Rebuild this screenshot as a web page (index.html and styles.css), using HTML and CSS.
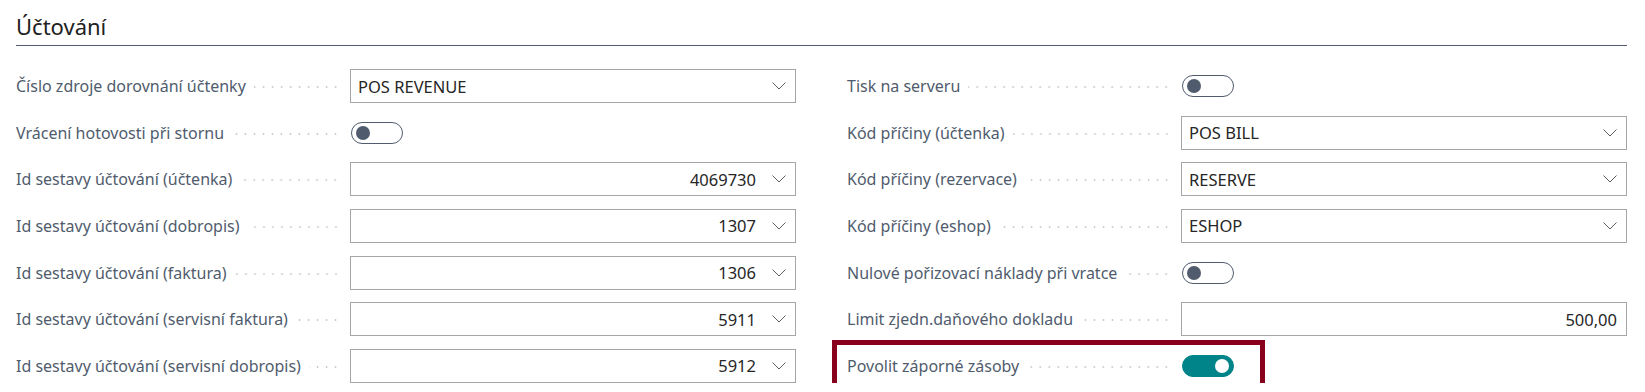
FILE: index.html
```html
<!DOCTYPE html>
<html lang="cs">
<head>
    <meta charset="UTF-8">
    <title>Účtování</title>
    <link rel="stylesheet" href="styles.css">
</head>
<body>
    <div class="section">
        <h2 class="section-title">Účtování</h2>
        <div class="columns">
            <div class="column">
                <div class="field">
                    <div class="caption"><span class="label">Číslo zdroje dorovnání účtenky</span><span class="leader"></span></div>
                    <div class="input">
                        <span class="value">POS REVENUE</span>
                        <svg class="chevron" width="14" height="8" viewBox="0 0 14 8"><path d="M0.5 0.5 L7 7 L13.5 0.5" fill="none" stroke="#605e5c" stroke-width="1"/></svg>
                    </div>
                </div>
                <div class="field">
                    <div class="caption"><span class="label">Vrácení hotovosti při stornu</span><span class="leader"></span></div>
                    <div class="control"><span class="toggle"></span></div>
                </div>
                <div class="field">
                    <div class="caption"><span class="label">Id sestavy účtování (účtenka)</span><span class="leader"></span></div>
                    <div class="input number">
                        <span class="value">4069730</span>
                        <svg class="chevron" width="14" height="8" viewBox="0 0 14 8"><path d="M0.5 0.5 L7 7 L13.5 0.5" fill="none" stroke="#605e5c" stroke-width="1"/></svg>
                    </div>
                </div>
                <div class="field">
                    <div class="caption"><span class="label">Id sestavy účtování (dobropis)</span><span class="leader"></span></div>
                    <div class="input number">
                        <span class="value">1307</span>
                        <svg class="chevron" width="14" height="8" viewBox="0 0 14 8"><path d="M0.5 0.5 L7 7 L13.5 0.5" fill="none" stroke="#605e5c" stroke-width="1"/></svg>
                    </div>
                </div>
                <div class="field">
                    <div class="caption"><span class="label">Id sestavy účtování (faktura)</span><span class="leader"></span></div>
                    <div class="input number">
                        <span class="value">1306</span>
                        <svg class="chevron" width="14" height="8" viewBox="0 0 14 8"><path d="M0.5 0.5 L7 7 L13.5 0.5" fill="none" stroke="#605e5c" stroke-width="1"/></svg>
                    </div>
                </div>
                <div class="field">
                    <div class="caption"><span class="label">Id sestavy účtování (servisní faktura)</span><span class="leader"></span></div>
                    <div class="input number">
                        <span class="value">5911</span>
                        <svg class="chevron" width="14" height="8" viewBox="0 0 14 8"><path d="M0.5 0.5 L7 7 L13.5 0.5" fill="none" stroke="#605e5c" stroke-width="1"/></svg>
                    </div>
                </div>
                <div class="field">
                    <div class="caption"><span class="label">Id sestavy účtování (servisní dobropis)</span><span class="leader"></span></div>
                    <div class="input number">
                        <span class="value">5912</span>
                        <svg class="chevron" width="14" height="8" viewBox="0 0 14 8"><path d="M0.5 0.5 L7 7 L13.5 0.5" fill="none" stroke="#605e5c" stroke-width="1"/></svg>
                    </div>
                </div>
            </div>

            <div class="column">
                <div class="field">
                    <div class="caption"><span class="label">Tisk na serveru</span><span class="leader"></span></div>
                    <div class="control"><span class="toggle"></span></div>
                </div>
                <div class="field">
                    <div class="caption"><span class="label">Kód příčiny (účtenka)</span><span class="leader"></span></div>
                    <div class="input">
                        <span class="value">POS BILL</span>
                        <svg class="chevron" width="14" height="8" viewBox="0 0 14 8"><path d="M0.5 0.5 L7 7 L13.5 0.5" fill="none" stroke="#605e5c" stroke-width="1"/></svg>
                    </div>
                </div>
                <div class="field">
                    <div class="caption"><span class="label">Kód příčiny (rezervace)</span><span class="leader"></span></div>
                    <div class="input">
                        <span class="value">RESERVE</span>
                        <svg class="chevron" width="14" height="8" viewBox="0 0 14 8"><path d="M0.5 0.5 L7 7 L13.5 0.5" fill="none" stroke="#605e5c" stroke-width="1"/></svg>
                    </div>
                </div>
                <div class="field">
                    <div class="caption"><span class="label">Kód příčiny (eshop)</span><span class="leader"></span></div>
                    <div class="input">
                        <span class="value">ESHOP</span>
                        <svg class="chevron" width="14" height="8" viewBox="0 0 14 8"><path d="M0.5 0.5 L7 7 L13.5 0.5" fill="none" stroke="#605e5c" stroke-width="1"/></svg>
                    </div>
                </div>
                <div class="field">
                    <div class="caption"><span class="label">Nulové pořizovací náklady při vratce</span><span class="leader"></span></div>
                    <div class="control"><span class="toggle"></span></div>
                </div>
                <div class="field">
                    <div class="caption"><span class="label">Limit zjedn.daňového dokladu</span><span class="leader"></span></div>
                    <div class="input number plain">
                        <span class="value">500,00</span>
                    </div>
                </div>
                <div class="highlight-frame">
                    <div class="field">
                        <div class="caption"><span class="label">Povolit záporné zásoby</span><span class="leader"></span></div>
                        <div class="control"><span class="toggle on"></span></div>
                    </div>
                </div>
            </div>
        </div>
    </div>
</body>
</html>
```

FILE: styles.css
```css
body {
    margin: 0;
    background-color: #fff;
    font-family: "Noto Sans", "Open Sans", sans-serif;
}

.section {
    padding: 12px 18px 0 16px;
}

.section-title {
    margin: 0;
    font-size: 22px;
    font-weight: normal;
    line-height: 28px;
    color: #212121;
    padding-bottom: 5px;
    border-bottom: 1px solid #505c6d;
}

.columns {
    display: grid;
    grid-template-columns: 1fr 1fr;
    column-gap: 51px;
    margin-top: 23px;
}

.column {
    display: flex;
    flex-direction: column;
    gap: 12.67px;
}

.field {
    display: grid;
    grid-template-columns: 334px 1fr;
    height: 34px;
    flex-shrink: 0;
    align-items: center;
}

.caption {
    display: flex;
    align-items: center;
    padding-right: 10px;
}

.label {
    font-size: 16px;
    color: #505c6d;
    white-space: nowrap;
}

.leader {
    flex: 1;
    height: 4px;
    margin-left: 8px;
    margin-top: 2px;
    background-image: radial-gradient(circle, #c8c8c8 0.8px, transparent 1.2px);
    background-size: 9px 4px;
    background-position: right center;
}

.input {
    display: flex;
    align-items: center;
    height: 34px;
    box-sizing: border-box;
    border: 1px solid #a6a6a6;
    padding: 0 9px 0 7px;
    font-size: 16.5px;
    color: #262626;
}

.input .value {
    flex: 1;
}

.input.number .value {
    text-align: right;
    margin-right: 16px;
}

.input.plain .value {
    margin-right: 0;
}

.chevron {
    display: block;
}

.control {
    display: flex;
    align-items: center;
}

.toggle {
    position: relative;
    display: inline-block;
    width: 52px;
    height: 22px;
    box-sizing: border-box;
    border: 1px solid #505c6d;
    border-radius: 11px;
    margin-left: 1px;
}

.toggle::after {
    content: "";
    position: absolute;
    left: 4px;
    top: 3px;
    width: 14px;
    height: 14px;
    border-radius: 50%;
    background-color: #505c6d;
}

.toggle.on {
    background-color: #008489;
    border-color: #008489;
}

.toggle.on::after {
    left: auto;
    right: 4px;
    background-color: #fff;
}

/* red frame drawn around the last row */
.highlight-frame {
    box-sizing: border-box;
    width: 433px;
    height: 48px;
    flex-shrink: 0;
    margin: -9px 0 -5px -15px;
    padding: 4px 0 0 10px;
    border: 5px solid #88001b;
}
```
